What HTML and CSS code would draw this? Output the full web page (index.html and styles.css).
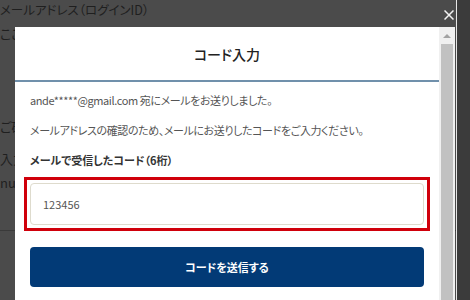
FILE: index.html
```html
<!DOCTYPE html>
<html lang="ja">
<head>
  <meta charset="UTF-8" />
  <meta name="viewport" content="width=device-width, initial-scale=1.0" />
  <title>コード入力</title>
  <link rel="stylesheet" href="styles.css">
</head>
<body>
  <!-- 背景のページ（オーバーレイで暗く見える） -->
  <div class="page">
    <div class="page-main">
      <p class="page-title">メールアドレス（ログインID）</p>
      <div class="page-side">
        <p class="page-line page-here">ここ</p>
        <p class="page-line page-confirm">ご確</p>
        <p class="page-line page-input">入力</p>
        <p class="page-line page-num">nu</p>
      </div>
      <div class="page-rule"></div>
    </div>
    <div class="page-bar"></div>
  </div>

  <!-- 閉じるボタン -->
  <button class="close-btn" aria-label="閉じる">
    <svg width="10" height="10" viewBox="0 0 10 10">
      <path d="M0.5 0.5 L9.5 9.5 M9.5 0.5 L0.5 9.5" stroke="#f2f2f2" stroke-width="1.5" fill="none" />
    </svg>
  </button>

  <div class="modal">
    <div class="modal-body">
      <div class="modal-header">
        <h2>コード入力</h2>
      </div>
      <div class="modal-content">
        <p class="msg">ande*****@gmail.com 宛にメールをお送りしました。</p>
        <p class="msg">メールアドレスの確認のため、メールにお送りしたコードをご入力ください。</p>
        <label class="field-label" for="code">メールで受信したコード（6桁）</label>
        <div class="highlight">
          <input type="text" id="code" value="123456">
        </div>
        <button class="btn">コードを送信する</button>
      </div>
    </div>
    <div class="scrollbar">
      <span class="scroll-arrow"></span>
      <span class="scroll-thumb"></span>
    </div>
  </div>
</body>
</html>
```

FILE: styles.css
```css
:root {
  --overlay: #4b4b4b;
  --navy: #023a76;
  --red: #d0000b;
  --text: #333;
  --sub: #555;
}

* {
  box-sizing: border-box;
  margin: 0;
  padding: 0;
  font-family: 'Noto Sans CJK JP', 'Noto Sans', sans-serif;
  font-feature-settings: "palt";
}

body {
  width: 470px;
  height: 300px;
  overflow: hidden;
  background: var(--overlay);
  position: relative;
}

/* 背景のページ */
.page {
  display: flex;
  height: 100%;
}

.page-main {
  flex: 1;
  color: #1f1f1f;
  font-size: 13px;
}

.page-title {
  line-height: 20px;
  font-size: 12.5px;
}

.page-side {
  width: 15px;
  overflow: hidden;
  white-space: nowrap;
}

.page-line {
  line-height: 18px;
}

.page-here { margin-top: 5px; }
.page-confirm { margin-top: 75px; }
.page-input { margin-top: 14px; }
.page-num { margin-top: 6px; }

.page-rule {
  margin-top: 38px;
  border-top: 1px solid #3a3a3a;
}

.page-bar {
  width: 14px;
  background: #3b3b3b;
  border-left: 1px solid #e6e6e6;
}

.close-btn {
  position: absolute;
  top: 10px;
  left: 444px;
  background: none;
  border: none;
  width: 10px;
  height: 10px;
  display: flex;
}

/* モーダル */
.modal {
  position: absolute;
  left: 15px;
  top: 27px;
  width: 440px;
  height: 300px;
  display: flex;
}

.modal-body {
  flex: 1;
  background: #fff;
}

.modal-header {
  height: 55px;
  border-bottom: 2px solid #7090ab;
  display: flex;
  align-items: center;
  justify-content: center;
}

.modal-header h2 {
  font-size: 14px;
  font-weight: 500;
  color: #222;
}

.modal-content {
  padding: 8px 15px 0;
}

.msg {
  font-size: 11px;
  line-height: 20px;
  letter-spacing: -0.4px;
  color: var(--sub);
  margin-bottom: 10px;
}

.field-label {
  display: block;
  font-size: 11px;
  line-height: 20px;
  font-weight: 700;
  color: var(--text);
  margin-bottom: 7px;
}

.highlight {
  margin: 0 -6px;
  padding: 3px;
  border: 3px solid var(--red);
}

.highlight input {
  display: block;
  width: 100%;
  height: 42px;
  padding: 0 12px;
  border: 1px solid #dedbcd;
  border-radius: 4px;
  font-size: 11px;
  color: var(--sub);
  background: #fff;
  outline: none;
}

.btn {
  display: block;
  width: 100%;
  height: 40px;
  margin-top: 16px;
  background: var(--navy);
  color: #fff;
  border: none;
  border-radius: 4px;
  font-size: 11px;
  font-weight: 700;
}

/* 偽スクロールバー */
.scrollbar {
  width: 16px;
  background: #f0f0f0;
  display: flex;
  flex-direction: column;
  align-items: center;
  padding: 2px 2px 0;
}

.scroll-arrow {
  width: 0;
  height: 0;
  margin: 5px 0 6px;
  border-left: 4px solid transparent;
  border-right: 4px solid transparent;
  border-bottom: 4px solid #a3a3a3;
}

.scroll-thumb {
  flex: 1;
  width: 100%;
  background: #c1c1c1;
}
```
